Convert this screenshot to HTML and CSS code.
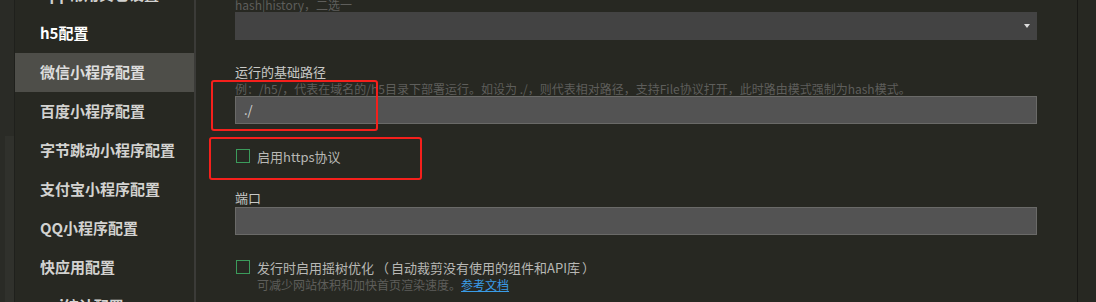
FILE: index.html
```html
<!DOCTYPE html>
<html lang="zh-CN">
<head>
<meta charset="utf-8">
<title>manifest</title>
<link rel="stylesheet" href="styles.css">
</head>
<body>
<div class="app">
  <div class="gutter"><div class="gutter-thumb"></div></div>
  <nav class="sidebar">
    <div class="nav-item">App常用其它设置</div>
    <div class="nav-item nav-bright">h5配置</div>
    <div class="nav-item active">微信小程序配置</div>
    <div class="nav-item">百度小程序配置</div>
    <div class="nav-item">字节跳动小程序配置</div>
    <div class="nav-item">支付宝小程序配置</div>
    <div class="nav-item">QQ小程序配置</div>
    <div class="nav-item">快应用配置</div>
    <div class="nav-item">uni统计配置</div>
  </nav>
  <main class="main">
    <div class="content">
      <div class="hint hint-top">hash|history，二选一</div>
      <div class="select"><span class="caret"></span></div>

      <div class="label label-gap">运行的基础路径</div>
      <div class="hint">例：/h5/，代表在域名的/h5目录下部署运行。如设为 ./，则代表相对路径，支持File协议打开，此时路由模式强制为hash模式。</div>
      <div class="input">./</div>

      <div class="check-row"><span class="box"></span><span class="check-text">启用https协议</span></div>

      <div class="label label-gap">端口</div>
      <div class="input"></div>

      <div class="check-row"><span class="box"></span><span class="check-text">发行时启用摇树优化<span class="paren">（</span>自动裁剪没有使用的组件和API库<span class="paren">）</span></span></div>
      <div class="hint hint-sub">可减少网站体积和加快首页渲染速度。<a class="link" href="#">参考文档</a></div>
    </div>
  </main>
  <div class="rail"></div>
  <div class="mark mark-1"></div>
  <div class="mark mark-2"></div>
</div>
</body>
</html>
```

FILE: styles.css
```css
html, body {
  margin: 0;
  padding: 0;
  background: #272822;
  overflow: hidden;
}
body {
  font-family: "Noto Sans CJK SC", "Noto Sans", sans-serif;
}
.app {
  position: relative;
  display: flex;
  width: 1096px;
  height: 302px;
  overflow: hidden;
  background: #272822;
}
.gutter {
  width: 14px;
  flex: none;
  background: #2a2b26;
  border-right: 1px solid #1f201c;
  position: relative;
}
.gutter-thumb {
  margin-top: 136px;
  margin-left: 5px;
  width: 9px;
  height: 200px;
  background: #30312c;
}
.sidebar {
  width: 179px;
  flex: none;
  border-right: 2px solid #3b3b38;
  margin-top: -25px;
  display: flex;
  flex-direction: column;
}
.nav-item {
  flex: none;
  height: 39px;
  line-height: 37px;
  padding-left: 25px;
  font-size: 15px;
  font-weight: 700;
  color: #d2d2d0;
  white-space: nowrap;
}
.nav-bright {
  color: #ffffff;
}
.active {
  background: #4e4e49;
  color: #dcdcdc;
}
.main {
  flex: 1;
  padding-left: 39px;
  padding-right: 40px;
}
.content {
  display: flex;
  flex-direction: column;
}
.rail {
  width: 1px;
  flex: none;
  background: #181815;
  margin-right: 18px;
}
.hint {
  font-size: 12px;
  line-height: 15px;
  color: #5e5e5b;
  white-space: nowrap;
}
.hint-top {
  margin-top: -3px;
  line-height: 15px;
}
.select {
  height: 28px;
  background: #434343;
  position: relative;
}
.caret {
  position: absolute;
  right: 7px;
  top: 12px;
  width: 0;
  height: 0;
  border-left: 3px solid transparent;
  border-right: 3px solid transparent;
  border-top: 4px solid #dcdcdc;
}
.label {
  font-size: 13px;
  line-height: 18px;
  color: #c9c9c6;
}
.label-gap {
  margin-top: 23px;
}
.input {
  box-sizing: border-box;
  height: 28px;
  background: #535353;
  border: 1px solid #6a6a68;
  padding-left: 8px;
  font-size: 13px;
  line-height: 26px;
  color: #d6d6d6;
}
.check-row {
  margin-top: 22px;
  height: 20px;
  display: flex;
  align-items: center;
  gap: 7px;
}
.box {
  box-sizing: border-box;
  width: 14px;
  height: 14px;
  margin-left: 1px;
  border: 1px solid #3b9b5b;
}
.check-text {
  font-size: 13px;
  color: #b8b8b5;
  white-space: nowrap;
}
.paren {
  padding: 0 2px;
}
.hint-sub {
  margin-left: 22px;
  margin-top: 0;
}
.link {
  color: #3a9ce6;
  text-decoration: underline;
}
.mark {
  position: absolute;
  box-sizing: border-box;
  border: 2px solid #f5201c;
  border-radius: 3px;
}
.mark-1 {
  left: 211px;
  top: 80px;
  width: 167px;
  height: 51px;
}
.mark-2 {
  left: 209px;
  top: 137px;
  width: 213px;
  height: 43px;
}
```
